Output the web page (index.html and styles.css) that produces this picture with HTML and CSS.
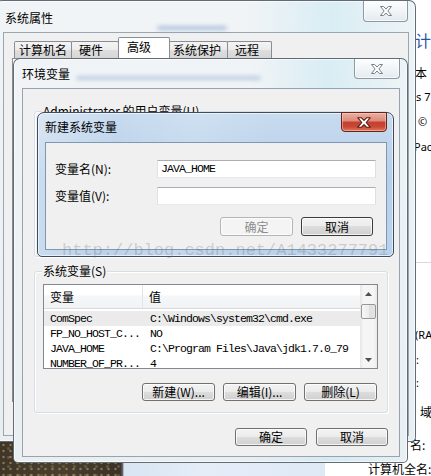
FILE: index.html
```html
<!DOCTYPE html>
<html lang="zh-CN">
<head>
<meta charset="utf-8">
<title>系统属性</title>
<link rel="stylesheet" href="styles.css">
</head>
<body>
<div class="screen">
  <div class="bg">
    <div class="bg-under"></div>
    <div class="desk"></div>
    <div class="desk-sep"></div>
    <div class="taskpane"></div>
    <div class="cp">
      <div class="cp-row cp-head">计</div>
      <div class="cp-row r-ben">本</div>
      <div class="cp-row r-s7">s 7</div>
      <div class="cp-row r-copy">©</div>
      <div class="cp-row r-pac">Pac</div>
      <div class="cp-rule"></div>
      <div class="cp-row r-ram">(RA</div>
      <div class="cp-row r-c1">:</div>
      <div class="cp-row r-c2">:</div>
      <div class="cp-row r-yu">域</div>
      <div class="cp-row r-name">名:</div>
      <div class="cp-row r-full">计算机全名:</div>
    </div>
  </div>

  <section class="win win-inactive win-sys">
    <header class="titlebar">
      <span class="title">系统属性</span>
      <span class="smudge smudge-sys"></span>
      <span class="close close-inactive">
        <svg width="12" height="10" viewBox="0 0 12 10"><polygon points="0.5,0.5 3.6,0.5 6,3 8.4,0.5 11.5,0.5 7.9,5 11.5,9.5 8.4,9.5 6,7 3.6,9.5 0.5,9.5 4.1,5" fill="#fdfdfd" stroke="#76818c" stroke-width="1" stroke-linejoin="round"/></svg>
      </span>
    </header>
    <div class="client sys-client">
      <div class="tabs">
        <div class="tab t1">计算机名</div>
        <div class="tab t2">硬件</div>
        <div class="tab t3 tab-sel">高级</div>
        <div class="tab t4">系统保护</div>
        <div class="tab t5">远程</div>
      </div>
      <div class="tabpage"></div>
    </div>
  </section>

  <section class="win win-inactive win-env">
    <header class="titlebar">
      <span class="title">环境变量</span>
      <span class="smudge smudge-env"></span>
      <span class="close close-inactive">
        <svg width="12" height="10" viewBox="0 0 12 10"><polygon points="0.5,0.5 3.6,0.5 6,3 8.4,0.5 11.5,0.5 7.9,5 11.5,9.5 8.4,9.5 6,7 3.6,9.5 0.5,9.5 4.1,5" fill="#fdfdfd" stroke="#76818c" stroke-width="1" stroke-linejoin="round"/></svg>
      </span>
    </header>
    <div class="client env-client">
      <div class="group g-user">
        <div class="legend">Administrator 的用户变量(U)</div>
      </div>
      <div class="group g-sys">
        <div class="legend">系统变量(S)</div>
        <div class="listview">
          <div class="lv-main">
            <div class="lv-head">
              <div class="c1">变量</div>
              <div class="c2">值</div>
            </div>
            <div class="lv-rows mono">
              <div class="lv-row sel"><div class="c1">ComSpec</div><div class="c2">C:\Windows\system32\cmd.exe</div></div>
              <div class="lv-row"><div class="c1">FP_NO_HOST_C...</div><div class="c2">NO</div></div>
              <div class="lv-row"><div class="c1">JAVA_HOME</div><div class="c2">C:\Program Files\Java\jdk1.7.0_79</div></div>
              <div class="lv-row"><div class="c1">NUMBER_OF_PR...</div><div class="c2">4</div></div>
            </div>
          </div>
          <div class="scrollbar">
            <div class="sb-btn"><svg width="7" height="4" viewBox="0 0 7 4"><polygon points="0,4 3.5,0 7,4" fill="#505050"/></svg></div>
            <div class="sb-track"><div class="sb-thumb"></div></div>
            <div class="sb-btn"><svg width="7" height="4" viewBox="0 0 7 4"><polygon points="0,0 7,0 3.5,4" fill="#505050"/></svg></div>
          </div>
        </div>
        <div class="btnrow grp-btns">
          <button class="btn">新建(W)...</button>
          <button class="btn">编辑(I)...</button>
          <button class="btn">删除(L)</button>
        </div>
      </div>
      <div class="btnrow env-footer">
        <button class="btn">确定</button>
        <button class="btn">取消</button>
      </div>
    </div>
  </section>

  <section class="win win-active win-new">
    <header class="titlebar">
      <span class="title">新建系统变量</span>
      <span class="close close-red">
        <svg width="14" height="11" viewBox="0 0 14 11"><polygon points="0.7,0.7 4.3,0.7 7,3.4 9.7,0.7 13.3,0.7 9.2,5.5 13.3,10.3 9.7,10.3 7,7.6 4.3,10.3 0.7,10.3 4.8,5.5" fill="#ffffff" stroke="#5b1a12" stroke-width="1.1" stroke-linejoin="round"/></svg>
      </span>
    </header>
    <div class="client new-client">
      <div class="field">
        <span class="flabel">变量名(N):</span>
        <div class="input mono">JAVA_HOME</div>
      </div>
      <div class="field">
        <span class="flabel">变量值(V):</span>
        <div class="input mono"></div>
      </div>
      <div class="btnrow new-btns">
        <button class="btn btn-disabled">确定</button>
        <button class="btn btn-default">取消</button>
      </div>
    </div>
  </section>

  <div class="watermark">http://blog.csdn.net/A1433277791</div>
</div>
</body>
</html>
```

FILE: styles.css
```css
* { box-sizing: border-box; }
html, body { margin: 0; padding: 0; }
body {
  width: 431px; height: 476px; overflow: hidden;
  font-family: "Noto Sans CJK SC", "Noto Sans", sans-serif;
  font-size: 12px; color: #000; background: #fff;
}
.screen { position: relative; width: 431px; height: 476px; overflow: hidden; }

/* ---------- background ---------- */
.bg {
  display: grid;
  grid-template-columns: 120px 4px 201px 1fr;
  grid-template-rows: 442px 34px;
  height: 476px;
}
.bg-under { grid-column: 1 / 4; grid-row: 1; background: #fff; }
.desk {
  grid-column: 1; grid-row: 2;
  background:
    radial-gradient(circle, rgba(190,170,120,.55) 0 0.8px, transparent 1.6px) 0 0 / 7px 6px,
    radial-gradient(circle, rgba(120,105,75,.6) 0 1px, transparent 2px) 3px 2px / 11px 9px,
    linear-gradient(90deg, #3f3628, #4a3f2e 50%, #3b3327);
}
.desk-sep { grid-column: 2; grid-row: 2; background: linear-gradient(90deg, #2d2d2d, #6a6a6a 70%, #e8eef6); }
.taskpane { grid-column: 3; grid-row: 2; background: linear-gradient(90deg, #d9e5f3, #e4edf8 40%, #dfe9f6); }
.cp {
  grid-column: 4; grid-row: 1 / 3;
  background: #fff;
  display: flex; flex-direction: column;
  padding-left: 90px;
  white-space: nowrap;
  font-family: "Noto Sans", "Noto Sans CJK SC", sans-serif;
}
.cp-row { line-height: 14px; font-size: 11px; }
.cp-head { font-size: 16px; line-height: 16px; margin-top: 32px; color: #1f57a6; font-family: "Noto Sans CJK SC", sans-serif; }
.r-ben { margin-top: 18px; font-size: 12px; font-family: "Noto Sans CJK SC", sans-serif; }
.r-s7 { margin-top: 10px; margin-left: 1px; }
.r-copy { margin-top: 11px; margin-left: 3px; }
.r-pac { margin-top: 11px; margin-left: -1px; }
.cp-rule { margin-top: 108px; height: 1px; margin-left: -5px; background: #d9d9d9; }
.r-ram { margin-top: 65px; margin-left: 0; }
.r-c1 { margin-top: 11px; margin-left: 1px; }
.r-c2 { margin-top: 9px; margin-left: 1px; }
.r-yu { margin-top: 15px; margin-left: 5px; font-size: 12px; font-family: "Noto Sans CJK SC", sans-serif; }
.r-name { margin-top: 19px; margin-left: -5px; font-size: 12px; font-family: "Noto Sans CJK SC", sans-serif; }
.r-full { margin-top: 10px; margin-left: -47px; font-size: 12px; font-family: "Noto Sans CJK SC", sans-serif; }

/* ---------- windows ---------- */
.win {
  position: absolute;
  display: flex; flex-direction: column;
  border: 1px solid rgba(60,70,82,.78);
  border-radius: 7px 7px 5px 5px;
  box-shadow: inset 0 0 0 1px rgba(255,255,255,.6);
}
.win-inactive {
  background:
    linear-gradient(90deg, rgba(255,255,255,0) 0%, rgba(255,255,255,0) 60%, rgba(196,232,242,.55) 80%, rgba(230,244,248,.3) 100%),
    linear-gradient(180deg, #f1f4f6, #e9eef1);
}
.win-sys { left: -5px; top: 0; width: 421px; height: 442px; padding: 0 6px 5px 7px; z-index: 1; }
.win-env { left: 13px; top: 58px; width: 395px; height: 405px; padding: 0 7px 5px 8px; z-index: 2; }
.win-new {
  left: 37px; top: 112px; width: 357px; height: 145px; padding: 0 6px 6px 7px; z-index: 3;
  border-color: #3e4c60;
  background:
    linear-gradient(100deg, rgba(255,255,255,.32) 0%, rgba(255,255,255,0) 22%, rgba(255,255,255,.14) 42%, rgba(255,255,255,0) 62%),
    linear-gradient(180deg, #c8dbef, #b7cfe9 45%, #bad2eb);
}

.titlebar { display: flex; align-items: flex-start; flex: none; }
.win-sys .titlebar { height: 31px; }
.win-env .titlebar { height: 29px; }
.win-new .titlebar { height: 29px; }
.title { line-height: 14px; font-size: 12px; white-space: nowrap; }
.win-sys .title { margin: 10px 0 0 2px; }
.win-env .title { margin-top: 8px; }
.win-new .title { margin-top: 7px; }

.smudge { display: block; height: 4px; border-radius: 2px; filter: blur(2px); opacity: .45; background: #5f86c2; }
.smudge-sys { width: 70px; margin: 25px 0 0 104px; }
.smudge-env { width: 185px; margin: 17px 0 0 6px; opacity: .35; }

.close {
  margin-left: auto; flex: none;
  display: flex; align-items: center; justify-content: center;
  border-radius: 0 0 4px 4px;
}
.close-inactive {
  border: 1px solid #8c99a5; border-top: none;
  background: linear-gradient(180deg, #fdfefe, #f1f5f7 50%, #e3eaee);
  box-shadow: inset 0 0 0 1px rgba(255,255,255,.7);
}
.win-sys .close { width: 45px; height: 21px; margin-right: 1px; }
.win-env .close { width: 46px; height: 20px; }
.close-red {
  width: 46px; height: 20px; margin-top: -1px;
  border: 1px solid #6a2118;
  background: linear-gradient(180deg, #eab0a2 0%, #dc8a78 45%, #c63f2f 50%, #c84634 75%, #e2795d 100%);
  box-shadow: inset 0 0 0 1px rgba(255,220,210,.45);
}

.client { flex: 1; background: #f0f0f0; display: flex; flex-direction: column; }
.sys-client { border: 1px solid #9aa6b2; }
.env-client { border: 1px solid #97a3b0; }
.new-client { border: 1px solid #8097b3; }

/* ---------- tabs ---------- */
.tabs { display: flex; align-items: flex-end; height: 21px; margin-top: 4px; padding-left: 10px; flex: none; }
.tab {
  height: 17px; border: 1px solid #898c95; border-bottom: none;
  border-radius: 2px 2px 0 0;
  background: linear-gradient(180deg, #f4f4f4, #ebebeb 50%, #dedede 51%, #d6d6d6);
  line-height: 16px; margin-right: -1px; white-space: nowrap;
}
.t1 { width: 58px; padding-left: 4px; }
.t2 { width: 48px; padding-left: 7px; }
.t3 { width: 52px; padding-left: 8px; }
.t4 { width: 59px; padding-left: 3px; }
.t5 { width: 45px; padding-left: 7px; }
.tab-sel {
  height: 22px; margin-bottom: -1px; position: relative; z-index: 1;
  background: #fff; line-height: 14px; padding-top: 2px;
}
.tabpage { flex: 1; margin: 0 8px 33px 8px; border: 1px solid #898c95; background: #fff; }

/* ---------- env client ---------- */
.group { border: 1px solid #d5dfe5; border-radius: 3px; margin: 0 11px; flex: none; box-shadow: 1px 1px 0 #fff, inset 1px 1px 0 #fff; }
.legend { width: fit-content; background: #f0f0f0; line-height: 14px; margin: -8px 0 0 7px; padding: 0 1px; white-space: nowrap; }
.g-user { margin-top: 22px; height: 146px; }
.g-sys { margin-top: 14px; padding-bottom: 11px; }

.listview {
  display: flex; height: 85px; margin: 6px 9px 0 8px;
  border: 1px solid #828790; background: #fff; overflow: hidden;
}
.lv-main { flex: 1; overflow: hidden; }
.lv-head {
  display: flex; height: 24px; line-height: 24px;
  background: linear-gradient(180deg, #ffffff, #ffffff 45%, #f6f7f9 46%, #f1f2f4);
  border-bottom: 1px solid #d8dade;
}
.lv-head .c1 { width: 99px; padding-left: 6px; border-right: 1px solid #e1e4e8; }
.lv-head .c2 { padding-left: 6px; }
.lv-rows { padding-top: 2px; }
.lv-row { display: flex; height: 15px; line-height: 15px; white-space: nowrap; }
.lv-row.sel { background: #ebebeb; }
.lv-row .c1 { width: 99px; padding-left: 6px; overflow: hidden; }
.lv-row .c2 { padding-left: 7px; }

.mono { font-family: "Liberation Mono", "DejaVu Sans Mono", monospace; font-size: 11.5px; letter-spacing: -0.9px; }

.scrollbar {
  width: 17px; flex: none; display: flex; flex-direction: column;
  background: linear-gradient(90deg, #e6e6e6, #f5f5f5 20%, #f5f5f5 80%, #e9e9e9);
}
.sb-btn { height: 17px; display: flex; align-items: center; justify-content: center; flex: none; }
.sb-track { flex: 1; padding-top: 2px; }
.sb-thumb {
  height: 15px; margin: 0 1px;
  border: 1px solid #979797; border-radius: 2px;
  background: linear-gradient(90deg, #f7f7f7, #ececec 50%, #dedede 51%, #e4e4e4);
}

.btnrow { display: flex; justify-content: flex-end; flex: none; }
.grp-btns { margin: 14px 10px 0 0; gap: 8px; }
.grp-btns .btn { width: 73px; height: 18px; }
.env-footer { margin: 15px 11px 0 0; gap: 9px; }
.env-footer .btn { width: 72px; height: 18px; }

.btn {
  appearance: none; -webkit-appearance: none;
  margin: 0; padding: 0;
  font-family: "Noto Sans CJK SC", "Noto Sans", sans-serif;
  font-size: 12px; line-height: 14px; color: #000;
  border: 1px solid #707070; border-radius: 3px;
  background: linear-gradient(180deg, #f3f3f3, #ececec 48%, #dddddd 50%, #d0d0d0);
  box-shadow: inset 0 0 0 1px rgba(255,255,255,.75);
  white-space: nowrap;
}
.btn-disabled { border-color: #b2b6ba; background: #f4f4f4; color: #8d8d8d; }
.btn-default { border-color: #3c3c3c; }

/* ---------- new dialog ---------- */
.new-client { padding-top: 17px; }
.field { display: flex; align-items: center; padding-left: 9px; flex: none; }
.field + .field { margin-top: 9px; }
.flabel { width: 102px; line-height: 14px; white-space: nowrap; }
.input {
  width: 219px; height: 18px; background: #fff;
  border: 1px solid; border-color: #abadb3 #dbdfe6 #e3e9ef #e2e3ea;
  line-height: 16px; padding-left: 3px; white-space: nowrap;
}
.new-btns { margin: 12px 13px 0 0; gap: 8px; }
.new-btns .btn { height: 19px; }
.new-btns .btn-disabled { width: 73px; }
.new-btns .btn-default { width: 72px; }

/* ---------- watermark ---------- */
.watermark {
  position: absolute; left: 62px; top: 242px; z-index: 10;
  font-family: "Liberation Mono", monospace; font-size: 17px; line-height: 17px;
  color: rgba(110,110,110,.28); white-space: nowrap; pointer-events: none;
}
```
